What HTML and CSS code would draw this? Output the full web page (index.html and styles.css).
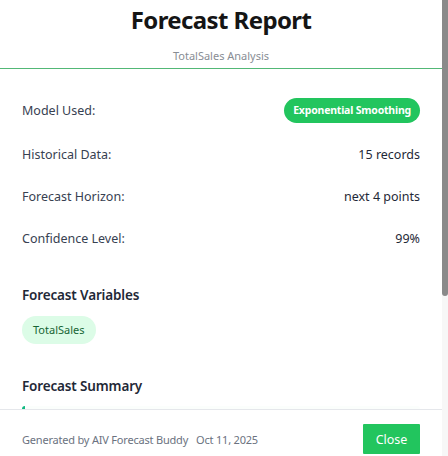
FILE: index.html
```html
<!DOCTYPE html>
<html lang="en">
<head>
<meta charset="utf-8">
<title>Forecast Report</title>
<link rel="stylesheet" href="styles.css">
</head>
<body>
<div class="window">
  <div class="modal">
    <header class="modal-header">
      <h1 class="title">Forecast Report</h1>
      <p class="subtitle">TotalSales Analysis</p>
    </header>
    <main class="modal-body">
      <section class="details">
        <div class="row">
          <span class="label">Model Used:</span>
          <span class="badge">Exponential Smoothing</span>
        </div>
        <div class="row">
          <span class="label">Historical Data:</span>
          <span class="value">15 records</span>
        </div>
        <div class="row">
          <span class="label">Forecast Horizon:</span>
          <span class="value">next 4 points</span>
        </div>
        <div class="row">
          <span class="label">Confidence Level:</span>
          <span class="value">99%</span>
        </div>
      </section>
      <section class="section">
        <h2 class="section-title">Forecast Variables</h2>
        <div class="chips">
          <span class="chip">TotalSales</span>
        </div>
      </section>
      <section class="section summary-section">
        <h2 class="section-title">Forecast Summary</h2>
        <div class="summary-card"></div>
      </section>
    </main>
    <footer class="modal-footer">
      <div class="meta">
        <span>Generated by AIV Forecast Buddy</span>
        <span>Oct 11, 2025</span>
      </div>
      <button class="close-btn" type="button">Close</button>
    </footer>
  </div>
  <div class="scrollbar" aria-hidden="true">
    <div class="scrollbar-thumb"></div>
  </div>
</div>
</body>
</html>
```

FILE: styles.css
```css
* { box-sizing: border-box; }
html, body {
  margin: 0;
  padding: 0;
  background: #ffffff;
}
body {
  font-family: "Noto Sans", "Open Sans", "DejaVu Sans", sans-serif;
  color: #1f2937;
  overflow: hidden;
}
.window {
  display: flex;
  height: 456px;
}
.modal {
  flex: 1;
  min-width: 0;
  height: 456px;
  display: flex;
  flex-direction: column;
  background: #ffffff;
}
.scrollbar {
  flex: none;
  width: 6px;
  height: 456px;
  background: #f7f7f7;
}
.scrollbar-thumb {
  height: 296px;
  background: #8a8a8a;
  border-radius: 0 0 3px 3px;
}

.modal-header {
  text-align: center;
  padding: 4px 22px 4px;
  border-bottom: 1px solid #52b876;
  flex: none;
}
.title {
  margin: 0;
  font-size: 24px;
  font-weight: 700;
  letter-spacing: -0.6px;
  line-height: 32px;
  color: #151515;
}
.subtitle {
  margin: 12px 0 0;
  font-size: 11px;
  line-height: 16px;
  color: #888d94;
}
.modal-body {
  flex: 1;
  min-height: 0;
  overflow: hidden;
  padding: 18px 22px 0;
}
.row {
  display: flex;
  justify-content: space-between;
  align-items: center;
  padding: 11px 0;
  font-size: 12.5px;
  line-height: 20px;
}
.row:last-child { padding-bottom: 10px; }
.label { color: #374151; }
.value { color: #1f2937; }
.badge {
  background: #22c55e;
  color: #ffffff;
  font-size: 10.5px;
  font-weight: 700;
  letter-spacing: -0.2px;
  line-height: 25px;
  height: 25px;
  padding: 0 9px;
  border-radius: 13px;
}
.section { margin-top: 26px; }
.summary-section { margin-top: 32px; }
.section-title {
  margin: 0;
  font-size: 13.5px;
  font-weight: 600;
  letter-spacing: -0.15px;
  line-height: 20px;
  color: #1f2937;
}
.chips {
  display: flex;
  gap: 8px;
  margin-top: 11px;
}
.chip {
  background: #dcfce7;
  color: #166534;
  font-size: 11px;
  line-height: 28px;
  height: 28px;
  padding: 0 11px;
  border-radius: 14px;
}
.summary-card {
  margin-top: 10px;
  height: 80px;
  border-left: 3px solid #10b981;
  border-radius: 3px;
  background: #fbfefc;
}
.modal-footer {
  flex: none;
  display: flex;
  justify-content: space-between;
  align-items: center;
  padding: 14px 22px 2px;
  background: #ffffff;
  border-top: 1px solid #e5e7eb;
}
.meta {
  display: flex;
  gap: 8px;
  font-size: 11px;
  letter-spacing: -0.2px;
  color: #6b7280;
}
.close-btn {
  font-family: inherit;
  background: #22c55e;
  color: #ffffff;
  border: none;
  border-radius: 1px;
  height: 30px;
  width: 57px;
  font-size: 12.5px;
  padding: 0;
}
```
